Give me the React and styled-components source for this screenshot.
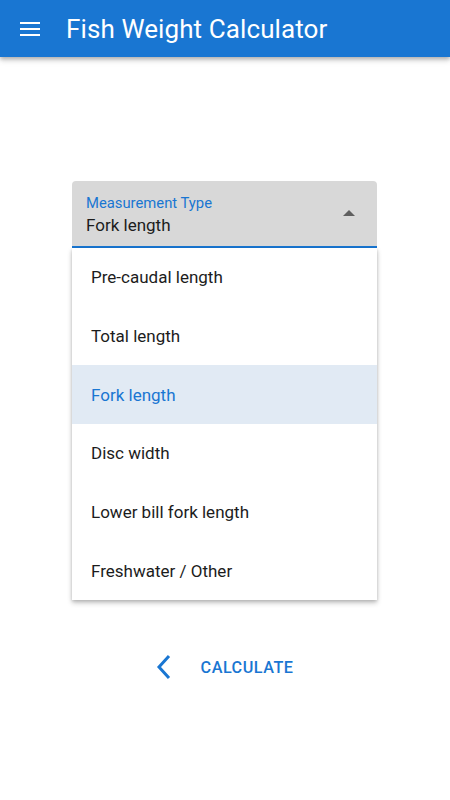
import React from "react";
import styled, { createGlobalStyle } from "styled-components";

const Global = createGlobalStyle`
  html, body { margin: 0; padding: 0; background: #fff; }
  body { font-family: Roboto, "Noto Sans", sans-serif; }
  * { box-sizing: border-box; }
`;

const Page = styled.div`
  width: 450px;
  height: 800px;
  display: flex;
  flex-direction: column;
  background: #fff;
  overflow: hidden;
`;

const AppBar = styled.header`
  height: 57px;
  background: #1976d2;
  display: flex;
  align-items: center;
  padding-left: 18px;
  gap: 24px;
  box-shadow: 0 2px 4px rgba(0,0,0,0.25), 0 4px 6px rgba(0,0,0,0.1);
  position: relative;
  z-index: 2;
`;

const Title = styled.h1`
  margin: 0;
  color: #fff;
  font-size: 26px;
  font-weight: 400;
  letter-spacing: 0.1px;
`;

const Main = styled.main`
  display: flex;
  flex-direction: column;
  align-items: center;
  padding-top: 124px;
  padding-right: 1px;
`;

const SelectWrap = styled.div`
  position: relative;
  width: 305px;
`;

const Field = styled.div`
  height: 67px;
  background: #d8d8d8;
  border-radius: 4px 4px 0 0;
  border-bottom: 2px solid #1976d2;
  display: flex;
  align-items: center;
  padding: 2px 22px 0 14px;
`;

const FieldText = styled.div`
  flex: 1;
  display: flex;
  flex-direction: column;
  gap: 2px;
`;

const Label = styled.span`
  color: #1976d2;
  font-size: 14.8px;
  line-height: 18px;
`;

const Value = styled.span`
  color: #1c1c1c;
  font-size: 17px;
  line-height: 22px;
`;

const Caret = styled.span`
  width: 0;
  height: 0;
  border-left: 6px solid transparent;
  border-right: 6px solid transparent;
  border-bottom: 6px solid #5f5f5f;
  margin-bottom: 4px;
`;

const Menu = styled.ul`
  position: absolute;
  top: 67px;
  left: 0;
  right: 0;
  margin: 0;
  padding: 0;
  list-style: none;
  background: #fff;
  box-shadow: 0 3px 5px rgba(0,0,0,0.22), 0 1px 3px rgba(0,0,0,0.15);
  z-index: 3;
`;

const Item = styled.li`
  height: 58.7px;
  display: flex;
  align-items: center;
  padding-left: 19px;
  font-size: 17px;
  color: ${p => (p.$active ? "#1976d2" : "#1c1c1c")};
  background: ${p => (p.$active ? "#e1eaf4" : "#fff")};
`;

const Actions = styled.div`
  margin-top: 406px;
  display: flex;
  align-items: center;
  gap: 28px;
  padding-right: 1px;
`;

const BackButton = styled.button`
  background: none;
  border: 0;
  padding: 0;
  display: flex;
  align-items: center;
`;

const CalcButton = styled.button`
  background: none;
  border: 0;
  padding: 0;
  color: #1976d2;
  font-family: Roboto, sans-serif;
  font-weight: 500;
  font-size: 16.2px;
  letter-spacing: 0.5px;
`;

const items = [
  "Pre-caudal length",
  "Total length",
  "Fork length",
  "Disc width",
  "Lower bill fork length",
  "Freshwater / Other",
];

export default function App() {
  return (
    <Page>
      <Global />
      <AppBar>
        <svg width="24" height="24" viewBox="0 0 24 24">
          <path d="M2 6h20M2 12h20M2 18h20" stroke="#fff" strokeWidth="2.2" />
        </svg>
        <Title>Fish Weight Calculator</Title>
      </AppBar>
      <Main>
        <SelectWrap>
          <Field>
            <FieldText>
              <Label>Measurement Type</Label>
              <Value>Fork length</Value>
            </FieldText>
            <Caret />
          </Field>
          <Menu>
            {items.map(t => (
              <Item key={t} $active={t === "Fork length"}>{t}</Item>
            ))}
          </Menu>
        </SelectWrap>
        <Actions>
          <BackButton aria-label="back">
            <svg width="18" height="26" viewBox="0 0 18 26">
              <path d="M14 2 L4 13 L14 24" fill="none" stroke="#1976d2" strokeWidth="3" />
            </svg>
          </BackButton>
          <CalcButton>CALCULATE</CalcButton>
        </Actions>
      </Main>
    </Page>
  );
}
